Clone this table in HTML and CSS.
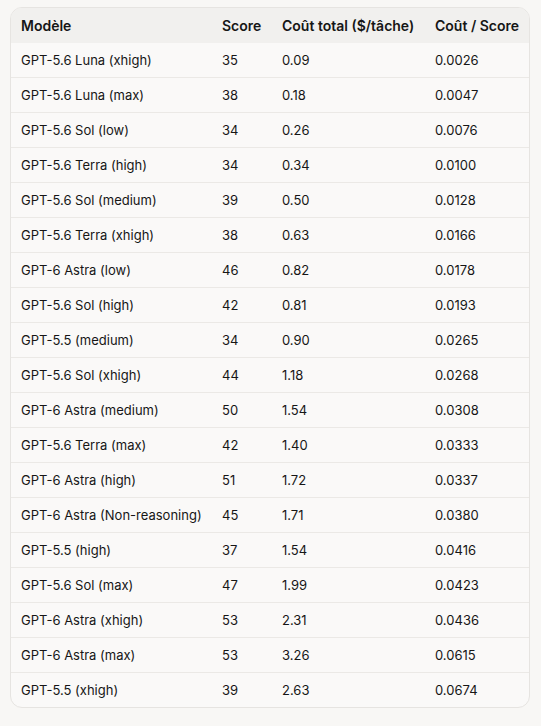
FILE: index.html
```html
<!DOCTYPE html>
<html lang="fr">
<head>
    <meta charset="UTF-8">
    <title>Coût par score</title>
    <link rel="stylesheet" href="styles.css">
</head>
<body>
    <div class="table-card">
        <table class="cost-table">
            <colgroup>
                <col class="col-model">
                <col class="col-score">
                <col class="col-total">
                <col class="col-ratio">
            </colgroup>
            <thead>
                <tr>
                    <th>Modèle</th>
                    <th>Score</th>
                    <th>Coût total ($/tâche)</th>
                    <th>Coût / Score</th>
                </tr>
            </thead>
            <tbody>
                <tr><td>GPT-5.6 Luna (xhigh)</td><td>35</td><td>0.09</td><td>0.0026</td></tr>
                <tr><td>GPT-5.6 Luna (max)</td><td>38</td><td>0.18</td><td>0.0047</td></tr>
                <tr><td>GPT-5.6 Sol (low)</td><td>34</td><td>0.26</td><td>0.0076</td></tr>
                <tr><td>GPT-5.6 Terra (high)</td><td>34</td><td>0.34</td><td>0.0100</td></tr>
                <tr><td>GPT-5.6 Sol (medium)</td><td>39</td><td>0.50</td><td>0.0128</td></tr>
                <tr><td>GPT-5.6 Terra (xhigh)</td><td>38</td><td>0.63</td><td>0.0166</td></tr>
                <tr><td>GPT-6 Astra (low)</td><td>46</td><td>0.82</td><td>0.0178</td></tr>
                <tr><td>GPT-5.6 Sol (high)</td><td>42</td><td>0.81</td><td>0.0193</td></tr>
                <tr><td>GPT-5.5 (medium)</td><td>34</td><td>0.90</td><td>0.0265</td></tr>
                <tr><td>GPT-5.6 Sol (xhigh)</td><td>44</td><td>1.18</td><td>0.0268</td></tr>
                <tr><td>GPT-6 Astra (medium)</td><td>50</td><td>1.54</td><td>0.0308</td></tr>
                <tr><td>GPT-5.6 Terra (max)</td><td>42</td><td>1.40</td><td>0.0333</td></tr>
                <tr><td>GPT-6 Astra (high)</td><td>51</td><td>1.72</td><td>0.0337</td></tr>
                <tr><td>GPT-6 Astra (Non-reasoning)</td><td>45</td><td>1.71</td><td>0.0380</td></tr>
                <tr><td>GPT-5.5 (high)</td><td>37</td><td>1.54</td><td>0.0416</td></tr>
                <tr><td>GPT-5.6 Sol (max)</td><td>47</td><td>1.99</td><td>0.0423</td></tr>
                <tr><td>GPT-6 Astra (xhigh)</td><td>53</td><td>2.31</td><td>0.0436</td></tr>
                <tr><td>GPT-6 Astra (max)</td><td>53</td><td>3.26</td><td>0.0615</td></tr>
                <tr><td>GPT-5.5 (xhigh)</td><td>39</td><td>2.63</td><td>0.0674</td></tr>
            </tbody>
        </table>
    </div>
</body>
</html>
```

FILE: styles.css
```css
:root {
    --page: #f8f7f5;
    --card: #faf9f8;
    --head: #f1f0ee;
    --border: #e6e4e1;
    --rule: #ebe9e6;
    --text: #161616;
}

body {
    margin: 0;
    padding: 7px 11px 17px 10px;
    background-color: var(--page);
    color: var(--text);
    font-family: 'Inter', 'Noto Sans', sans-serif;
}

/* Card */
.table-card {
    background-color: var(--card);
    border: 1px solid var(--border);
    border-radius: 12px;
    overflow: hidden;
}

.cost-table {
    width: 100%;
    border-collapse: collapse;
    table-layout: fixed;
}

.col-model { width: 211px; }
.col-score { width: 60px; }
.col-total { width: 153px; }

.cost-table thead tr {
    background-color: var(--head);
}

.cost-table th {
    height: 35px;
    padding: 0;
    text-align: left;
    font-size: 14px;
    font-weight: 600;
    white-space: nowrap;
}

.cost-table td {
    height: 34px;
    padding: 0;
    font-size: 13px;
    white-space: nowrap;
    border-top: 1px solid var(--rule);
}

.cost-table th:first-child,
.cost-table td:first-child {
    padding-left: 10px;
}

.cost-table th:last-child,
.cost-table td:last-child {
    padding-right: 10px;
}

.cost-table tbody tr:first-child td {
    border-top: none;
}

/* rules stop short of the card edges */
.cost-table tbody td:first-child,
.cost-table tbody td:last-child {
    background-image: linear-gradient(var(--card), var(--card));
    background-size: 10px 1px;
    background-repeat: no-repeat;
}

.cost-table tbody td:first-child {
    background-position: left top;
}

.cost-table tbody td:last-child {
    background-position: right top;
}
```
